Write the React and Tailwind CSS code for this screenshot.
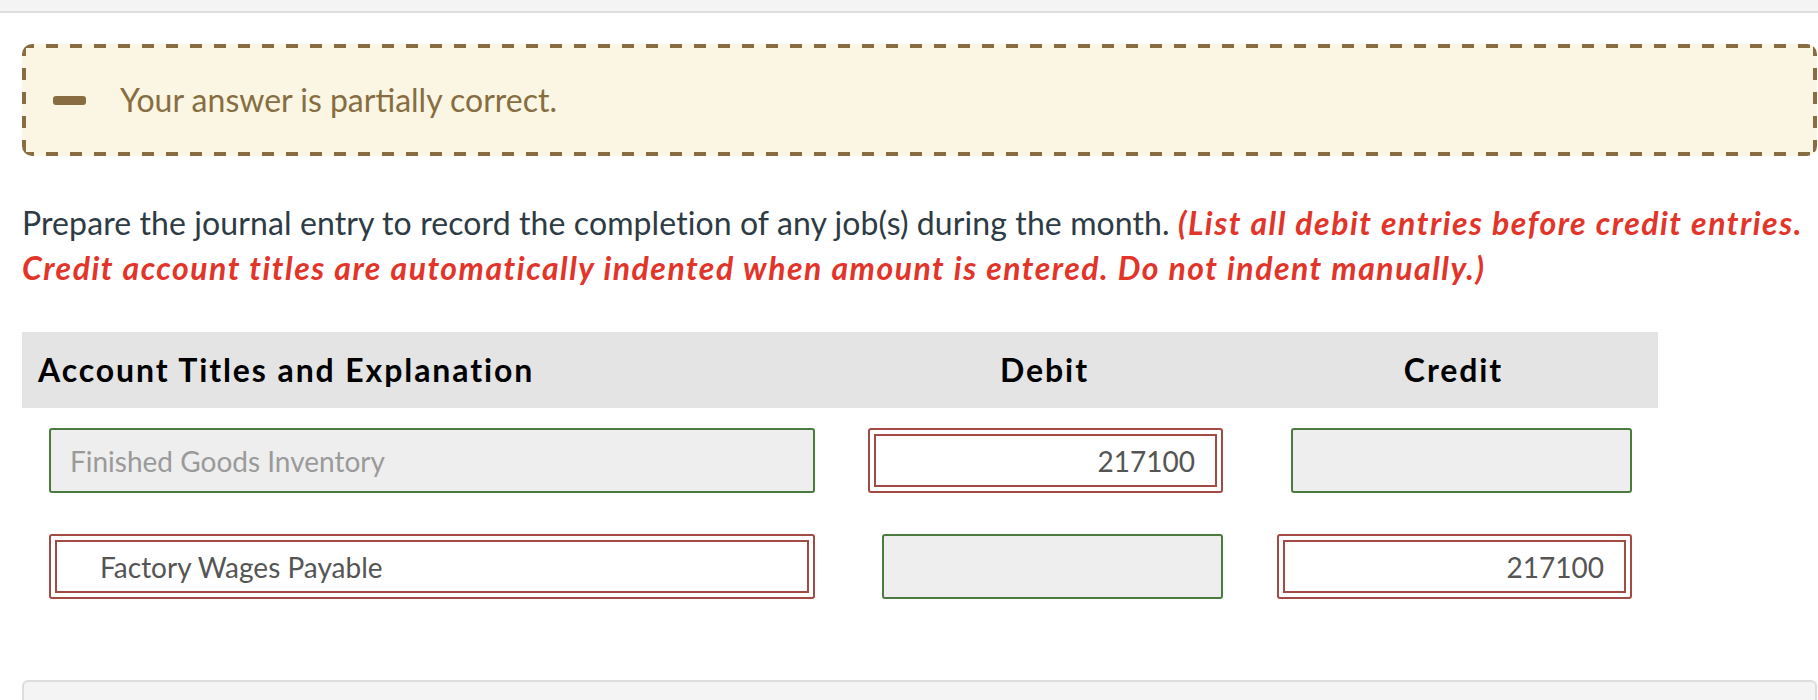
import React from 'react';

const RedInput = ({ value, className = '', align = 'right' }) => (
  <div className={`h-[65px] rounded-[3px] border-2 border-[#a34a45] bg-white p-[4px] ${className}`}>
    <div
      className={`flex h-full items-center border-2 border-[#a34a45] text-[28px] text-[#555] ${
        align === 'right' ? 'justify-end pr-[20px]' : 'justify-start pl-[43px]'
      }`}
    >
      {value}
    </div>
  </div>
);

const GreenInput = ({ value, className = '' }) => (
  <div
    className={`flex h-[65px] items-center rounded-[3px] border-2 border-[#4b7b3f] bg-[#eeeeee] pl-[19px] text-[28px] text-[#9a9a9a] ${className}`}
  >
    {value}
  </div>
);

export default function App() {
  return (
    <div className="min-h-[700px] bg-white font-['Lato','Open_Sans',sans-serif]">
      {/* top strip */}
      <div className="h-[13px] border-b-2 border-[#dddddd] bg-[#f4f4f4]"></div>

      <div className="pl-[22px] pr-px">
        {/* feedback, dashed edge drawn with gradients for the longer dashes */}
        <div className="mt-[31px] flex h-[112px] items-center rounded-[10px] bg-[#faf6e3] bg-no-repeat pl-[31px] [background-image:repeating-linear-gradient(90deg,#876d41_0_12px,transparent_12px_24px),repeating-linear-gradient(90deg,#876d41_0_12px,transparent_12px_24px),repeating-linear-gradient(180deg,#876d41_0_12px,transparent_12px_24px),repeating-linear-gradient(180deg,#876d41_0_12px,transparent_12px_24px)] [background-position:0_0,0_100%,0_0,100%_0] [background-size:100%_4px,100%_4px,4px_100%,4px_100%]">
          <div className="h-[9px] w-[33px] rounded-[3px] bg-[#876d41]"></div>
          <p className="ml-[34px] text-[32px] text-[#876d41]">Your answer is partially correct.</p>
        </div>

        {/* prompt */}
        <p className="mt-[44px] text-[32px] leading-[45px] tracking-[0.1px] text-[#2d3b45]">
          Prepare the journal entry to record the completion of any job(s) during the month.{' '}
          <span className="font-bold italic tracking-[1.5px] text-[#e3342a]">
            (List all debit entries before credit entries.
            <br />
            Credit account titles are automatically indented when amount is entered. Do not indent manually.)
          </span>
        </p>

        {/* table */}
        <div className="mt-[42px] w-[1636px]">
          <div className="grid h-[76px] grid-cols-[818px_409px_409px] items-center bg-[#e4e4e4] text-[32px] font-bold tracking-[1.9px] text-black">
            <div className="pl-[16px]">Account Titles and Explanation</div>
            <div className="text-center">Debit</div>
            <div className="text-center">Credit</div>
          </div>

          <div className="mt-[20px] grid grid-cols-[818px_409px_409px]">
            <GreenInput value="Finished Goods Inventory" className="ml-[27px] w-[766px]" />
            <RedInput value="217100" className="ml-[28px] w-[355px]" />
            <GreenInput value="" className="ml-[42px] w-[341px]" />
          </div>

          <div className="mt-[41px] grid grid-cols-[818px_409px_409px]">
            <RedInput value="Factory Wages Payable" align="left" className="ml-[27px] w-[766px]" />
            <GreenInput value="" className="ml-[42px] w-[341px]" />
            <RedInput value="217100" className="ml-[28px] w-[355px]" />
          </div>
        </div>

        {/* next panel */}
        <div className="mt-[81px] h-[30px] rounded-t-[6px] border-2 border-[#dddddd] bg-[#f4f4f4]"></div>
      </div>
    </div>
  );
}
